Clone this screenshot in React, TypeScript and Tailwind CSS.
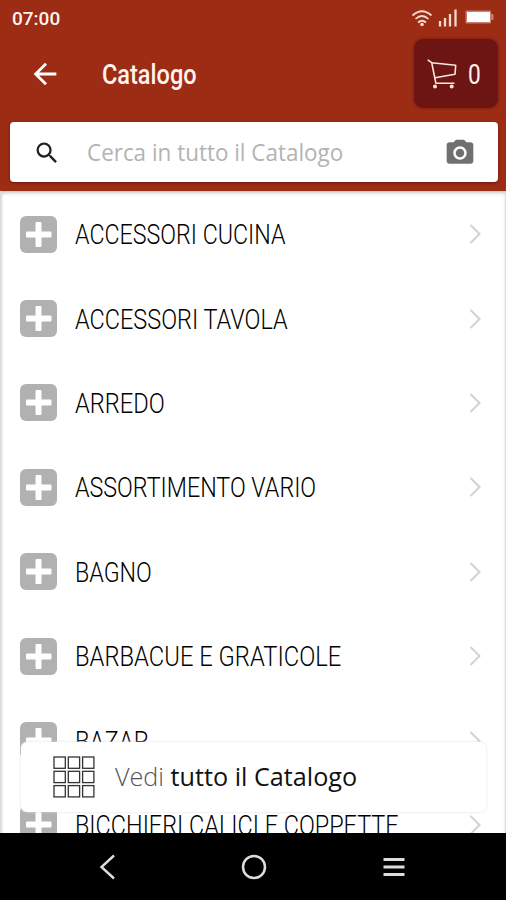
import { MdArrowBack, MdSearch, MdCameraAlt } from "react-icons/md";

const categories = [
  { name: "ACCESSORI CUCINA", fit: "scale-x-[0.815]" },
  { name: "ACCESSORI TAVOLA", fit: "scale-x-[0.823]" },
  { name: "ARREDO", fit: "scale-x-[0.83]" },
  { name: "ASSORTIMENTO VARIO", fit: "scale-x-[0.816]" },
  { name: "BAGNO", fit: "scale-x-[0.815]" },
  { name: "BARBACUE E GRATICOLE", fit: "scale-x-[0.834]" },
  { name: "BAZAR", fit: "scale-x-[0.835]" },
  { name: "BICCHIERI CALICI E COPPETTE", fit: "scale-x-[0.822]" },
];

export default function App() {
  return (
    <div className="relative flex h-[900px] w-[506px] flex-col overflow-hidden bg-white font-['Roboto',sans-serif]">
      <header className="flex h-[191px] shrink-0 flex-col bg-[#9d2c14]">
        <StatusBar />

        {/* Title bar */}
        <div className="flex h-[71px] items-center pr-2 pl-[28px]">
          <MdArrowBack className="size-[34px] text-white" />
          <h1 className="ml-[40px] origin-left scale-x-[0.84] pt-[3px] text-[28px] font-medium whitespace-nowrap text-[#fff3ee]">Catalogo</h1>
          <button className="ml-auto flex h-[69px] w-[84px] items-center rounded-[9px] bg-[#6d1512] pl-[13px] shadow-[0_0_3px_#6d1512]">
            <CartIcon />
            <span className="ml-[11px] origin-left scale-x-[0.84] pt-1 text-[27px] text-[#fff3ee]">0</span>
          </button>
        </div>

        {/* Search */}
        <div className="mt-[13px] ml-[10px] flex h-[60px] w-[488px] items-center rounded-[4px] bg-white pt-px pr-[22px] pl-[23px] shadow-[0_1px_3px_#6d1512]">
          <MdSearch className="size-[28px] text-[#222]" />
          <span className="ml-[26px] origin-left scale-x-[0.975] pb-px font-['Open_Sans',sans-serif] text-[23px] whitespace-nowrap text-[#b3b3b3]">
            Cerca in tutto il Catalogo
          </span>
          <MdCameraAlt className="ml-auto size-[32px] text-[#707070]" />
        </div>
      </header>

      {/* Category list */}
      <ul className="h-[642px] shrink-0 overflow-hidden border-r border-l-2 border-[#dedede] pt-px shadow-[inset_0_3px_4px_-2px_#aaa]">
        {categories.map((c) => (
          <li key={c.name} className="flex h-[84.4px] items-center pr-[24px] pl-[18px]">
            <PlusIcon />
            <span className={`ml-[18px] origin-left pt-[3px] text-[28.5px] font-light whitespace-nowrap text-black ${c.fit}`}>{c.name}</span>
            <svg viewBox="0 0 12 20" className="ml-auto h-5 w-3 shrink-0" fill="none" stroke="#d2d2d2" strokeWidth="2">
              <path d="M1.5 1L10.5 10L1.5 19" />
            </svg>
          </li>
        ))}
      </ul>

      {/* Floating button over the list */}
      <button className="absolute top-[742px] left-[21px] flex h-[70px] w-[465px] items-center rounded-[6px] bg-white pl-8 shadow-[0_0_3px_#ddd]">
        <GridIcon />
        <span className="ml-[20px] font-['Open_Sans',sans-serif] text-[25.2px] whitespace-nowrap text-[#111]">
          <span className="font-light text-[#555]">Vedi</span> tutto il Catalogo
        </span>
      </button>

      <NavBar />
    </div>
  );
}

function StatusBar() {
  return (
    <div className="flex h-[38px] shrink-0 items-center pr-[11px] pl-3">
      <span className="text-[19px] font-medium text-[#fff3ee]">07:00</span>
      <svg viewBox="0 0 84 20" className="ml-auto h-5 w-[84px]" fill="none" stroke="#f7d9d0">
        <path d="M1.5 6.5Q11 -2 20.5 6.5M4.5 10Q11 4 17.5 10M7 13.5Q11 10 15 13.5" strokeWidth="1.7" />
        <circle cx="11" cy="15.5" r="1.8" fill="#f7d9d0" stroke="none" />
        <path d="M29 17.5V12M34 17.5V9M39 17.5V5M44.5 17.5V0.5" strokeWidth="2.3" />
        <path d="M55 2h24.5v3.5h2.5v5h-2.5v3.5h-24.5z" stroke="#c8806e" fill="#c8806e" strokeWidth="1" />
        <rect x="56" y="3" width="23" height="10" fill="#fff" stroke="none" />
      </svg>
    </div>
  );
}

function CartIcon() {
  return (
    <svg viewBox="0 0 30 30" className="h-[30px] w-[30px] shrink-0" fill="none" stroke="#fbe6df" strokeWidth="1.6" strokeLinejoin="round">
      <path d="M0.7 0.8L4.7 3.7L8.9 24.3H27.5M4.7 3.7L28.7 6.3L28 15.3L8 18.7" />
      <circle cx="8" cy="27.4" r="2" fill="#fbe6df" stroke="none" />
      <circle cx="24.7" cy="27.4" r="2" fill="#fbe6df" stroke="none" />
    </svg>
  );
}

function PlusIcon() {
  return (
    <svg viewBox="0 0 37 37" className="h-[37px] w-[37px] shrink-0">
      <rect width="37" height="37" rx="6" fill="#b1b1b1" />
      <rect x="6" y="15.5" width="25.5" height="6" rx="1" fill="#fff" />
      <rect x="15.5" y="6" width="6" height="25" rx="1" fill="#fff" />
    </svg>
  );
}

function GridIcon() {
  return (
    <svg viewBox="0 0 42 42" className="h-[42px] w-[42px] shrink-0" fill="none" stroke="#333" strokeWidth="1.3">
      {[1, 15.3, 29.6].map((y) =>
        [1, 15.3, 29.6].map((x) => <rect key={`${x}-${y}`} x={x} y={y} width="11.3" height="11.3" />)
      )}
    </svg>
  );
}

function NavBar() {
  return (
    <nav className="flex h-[67px] shrink-0 items-center bg-black pl-[99px]">
      <svg viewBox="0 0 17 26" className="h-[26px] w-[17px]" fill="none" stroke="#ddd" strokeWidth="2.4">
        <path d="M15 1.5L2.5 13L15 24.5" />
      </svg>
      <svg viewBox="0 0 26 26" className="ml-[125px] h-[26px] w-[26px]" fill="none" stroke="#ddd" strokeWidth="2.5">
        <circle cx="13" cy="13" r="11" />
      </svg>
      <svg viewBox="0 0 22 20" className="ml-[116px] h-5 w-[22px]" fill="none" stroke="#ddd" strokeWidth="3">
        <path d="M0.5 2.5H21.5M0.5 10H21.5M0.5 17.5H21.5" />
      </svg>
    </nav>
  );
}
